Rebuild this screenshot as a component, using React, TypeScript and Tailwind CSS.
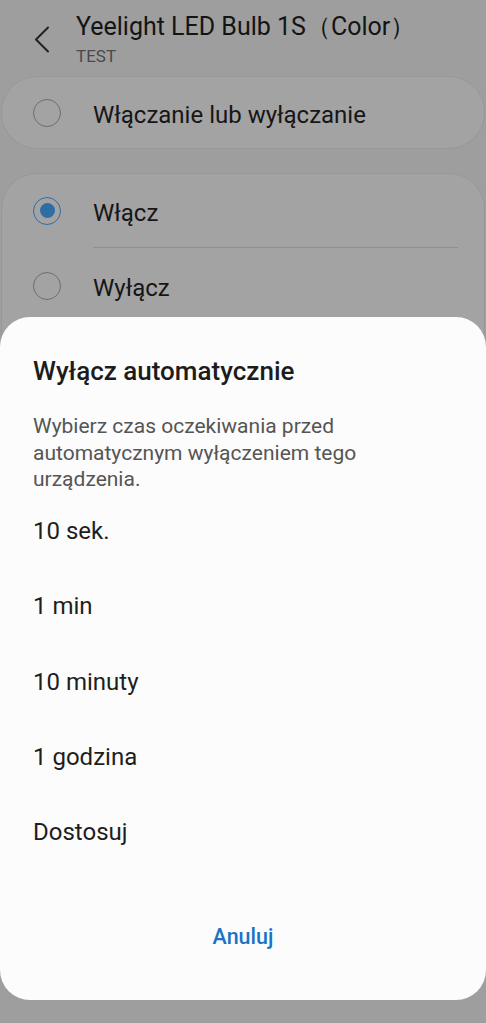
const options = ['10 sek.', '1 min', '10 minuty', '1 godzina', 'Dostosuj'];

function Radio({ checked }: { checked?: boolean }) {
    return (
        <div
            className={
                'flex h-[28px] w-[28px] shrink-0 items-center justify-center rounded-full border-[1.5px] ' +
                (checked ? 'border-[#2f6ea5]' : 'border-[#6e6e6e]')
            }
        >
            {checked && <div className="h-[15px] w-[15px] rounded-full bg-[#2f6ea5]" />}
        </div>
    );
}

export default function App() {
    return (
        <div className="relative h-[1023px] w-full overflow-hidden bg-[#9e9e9e] font-['Roboto',sans-serif]">
            {/* Fondo atenuado */}
            <div className="flex items-start pl-[34px] pt-[13px]">
                <svg width="16" height="28" viewBox="0 0 16 28" className="mt-[13px]" fill="none">
                    <polyline points="14,1.5 2,13.5 14,25.5" stroke="#202020" strokeWidth="2" strokeLinecap="round" strokeLinejoin="round" />
                </svg>
                <div className="ml-[26px] flex flex-col">
                    <span className="text-[25px] leading-[28px] text-[#141414]">Yeelight LED Bulb 1S（Color）</span>
                    <span className="mt-[6px] text-[17px] leading-[18px] text-[#4a4a4a]">TEST</span>
                </div>
            </div>

            <div className="mx-[1px] mt-[11px] flex h-[73px] items-center rounded-[36px] border border-[#989898] bg-[#a3a3a3] pl-[31px]">
                <Radio />
                <span className="ml-[32px] mt-[5px] text-[24px] text-[#161616]">Włączanie lub wyłączanie</span>
            </div>

            <div className="mx-[1px] mt-[24px] flex flex-col rounded-[36px] border border-[#989898] bg-[#a3a3a3] pb-[40px]">
                <div className="flex h-[73px] items-center pl-[31px]">
                    <Radio checked />
                    <span className="ml-[32px] mt-[4px] text-[24px] text-[#161616]">Włącz</span>
                </div>
                <div className="ml-[91px] mr-[26px] h-px bg-[#8f8f8f]" />
                <div className="flex h-[76px] items-center pl-[31px]">
                    <Radio />
                    <span className="ml-[32px] mt-[4px] text-[24px] text-[#161616]">Wyłącz</span>
                </div>
            </div>

            {/* Arkusz dolny */}
            <div className="absolute left-0 right-0 top-[317px] flex h-[683px] flex-col rounded-[30px] bg-[#fcfcfc] px-[33px] pt-[39px]">
                <h2 className="text-[26px] font-medium leading-[30px] text-[#1c1c1c]">Wyłącz automatycznie</h2>
                <p className="mt-[27px] text-[21px] leading-[26.7px] text-[#555555]">
                    Wybierz czas oczekiwania przed automatycznym wyłączeniem tego urządzenia.
                </p>
                <div className="flex flex-col">
                    {options.map((o) => (
                        <div key={o} className="flex h-[75.4px] items-center text-[24px] text-[#1e1e1e]">
                            {o}
                        </div>
                    ))}
                </div>
                <div className="mt-[53px] text-center text-[21.5px] font-medium leading-[28px] text-[#1a73c6]">Anuluj</div>
            </div>
        </div>
    );
}
